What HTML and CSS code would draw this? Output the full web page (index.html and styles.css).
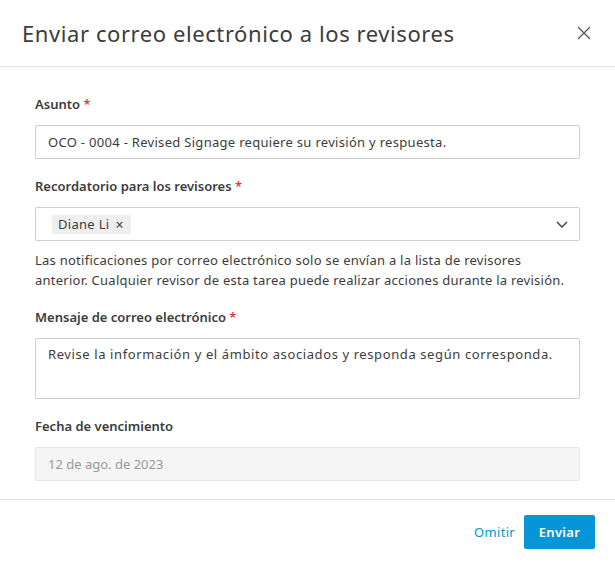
FILE: index.html
```html
<!DOCTYPE html>
<html lang="es">
<head>
<meta charset="utf-8">
<title>Enviar correo electrónico a los revisores</title>
<link rel="stylesheet" href="styles.css">
</head>
<body>
<div class="dialog">
  <header class="header">
    <h1 class="title">Enviar correo electrónico a los revisores</h1>
    <button class="close" aria-label="Cerrar">
      <svg width="14" height="14" viewBox="0 0 14 14"><path d="M1 1 L13 13 M13 1 L1 13" stroke="#555" stroke-width="1.3" fill="none"/></svg>
    </button>
  </header>
  <main class="body">
    <div class="field">
      <div class="label">Asunto <span class="req">*</span></div>
      <div class="input">OCO - 0004 - Revised Signage requiere su revisión y respuesta.</div>
    </div>
    <div class="field">
      <div class="label">Recordatorio para los revisores <span class="req">*</span></div>
      <div class="input select">
        <span class="chip">Diane Li <span class="chip-x">×</span></span>
        <svg class="chev" width="12" height="7" viewBox="0 0 12 7"><path d="M1 1 L6 6 L11 1" stroke="#3c3c3c" stroke-width="1.4" fill="none"/></svg>
      </div>
      <p class="help">Las notificaciones por correo electrónico solo se envían a la lista de revisores<br>anterior. Cualquier revisor de esta tarea puede realizar acciones durante la revisión.</p>
    </div>
    <div class="field">
      <div class="label">Mensaje de correo electrónico <span class="req">*</span></div>
      <div class="input textarea">Revise la información y el ámbito asociados y responda según corresponda.</div>
    </div>
    <div class="field">
      <div class="label">Fecha de vencimiento</div>
      <div class="input disabled">12 de ago. de 2023</div>
    </div>
  </main>
  <footer class="footer">
    <button class="btn-link">Omitir</button>
    <button class="btn-primary">Enviar</button>
  </footer>
</div>
</body>
</html>
```
FILE: styles.css
```css
html, body {
  margin: 0;
  padding: 0;
  background: #fff;
}
body {
  font-family: "Noto Sans", "Open Sans", sans-serif;
  color: #3c3c3c;
  font-size: 13px;
}
.dialog {
  width: 615px;
  height: 564px;
  display: flex;
  flex-direction: column;
}
.header {
  height: 67px;
  box-sizing: border-box;
  border-bottom: 1px solid #e3e3e3;
  display: flex;
  align-items: center;
  justify-content: space-between;
  padding: 0 24px 0 22px;
}
.title {
  margin: 0;
  font-size: 22px;
  font-weight: 400;
  color: #3c3c3c;
  letter-spacing: 0.58px;
}
.close {
  border: 0;
  background: none;
  padding: 0;
  width: 14px;
  height: 14px;
  display: flex;
}
.body {
  padding: 27px 35px 0 35px;
  display: flex;
  flex-direction: column;
  gap: 17px;
  flex: 1;
  border-bottom: 1px solid #e3e3e3;
}
.field {
  display: flex;
  flex-direction: column;
}
.label {
  font-size: 13px;
  font-weight: 600;
  line-height: 20px;
  margin-bottom: 11px;
  color: #3c3c3c;
}
.req {
  color: #e23c3c;
}
.input {
  box-sizing: border-box;
  height: 34px;
  border: 1px solid #cfcfcf;
  border-radius: 2px;
  padding: 0 12px;
  display: flex;
  align-items: center;
  font-size: 13px;
  letter-spacing: 0.3px;
  color: #3c3c3c;
}
.select {
  padding: 0 11px 0 16px;
  justify-content: space-between;
}
.chip {
  background: #eeeeee;
  border-radius: 2px;
  height: 19px;
  padding: 0 7px 0 6px;
  display: flex;
  align-items: center;
  gap: 6px;
  font-size: 13px;
}
.chip-x {
  font-size: 14px;
}
.help {
  margin: 9px 0 0 0;
  line-height: 20px;
  font-size: 13px;
  letter-spacing: 0.25px;
  color: #3c3c3c;
}
.textarea {
  height: 61px;
  align-items: flex-start;
  padding-top: 6px;
  letter-spacing: 0.6px;
}
.disabled {
  background: #f5f5f5;
  border-color: #e6e6e6;
  color: #999;
  letter-spacing: 0;
}
.footer {
  height: 64px;
  display: flex;
  align-items: center;
  justify-content: flex-end;
  gap: 9px;
  padding: 0 20px;
}
.btn-link {
  border: 0;
  background: none;
  color: #0696d7;
  font-family: inherit;
  font-size: 13px;
  letter-spacing: 0.3px;
  padding: 0;
}
.btn-primary {
  border: 0;
  background: #0696d7;
  color: #fff;
  font-family: inherit;
  font-weight: 600;
  font-size: 13px;
  letter-spacing: 0.3px;
  width: 71px;
  height: 34px;
  border-radius: 2px;
}
```
